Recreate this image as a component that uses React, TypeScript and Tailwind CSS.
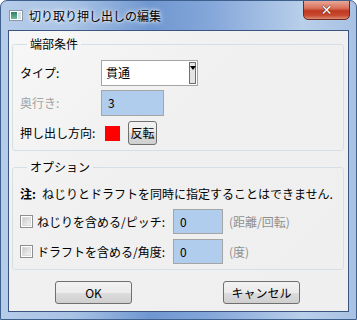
import React from 'react';

const font = "font-['Noto_Sans_CJK_JP','Noto_Sans_CJK_SC',sans-serif]";

function Checkbox() {
  return (
    <div className="w-[13px] h-[13px] border border-[#8e8f8f] bg-white flex items-center justify-center shrink-0">
      <div className="w-[9px] h-[9px] bg-[linear-gradient(135deg,#cbcbcb,#f4f4f4)] border border-[#dcdcdc]" />
    </div>
  );
}

function Button({ label, className = '' }: { label: string; className?: string }) {
  return (
    <div
      className={`flex items-center justify-center border border-[#707070] rounded-[3px] bg-[linear-gradient(#f2f2f2_0%,#ebebeb_50%,#dddddd_51%,#cfcfcf_100%)] text-[12px] text-black ${className}`}
    >
      {label}
    </div>
  );
}

function BlueInput({ value, className = '' }: { value: string; className?: string }) {
  return (
    <div className={`border border-[#a5a5a5] bg-[#b1cdee] flex items-center pl-[6px] text-[12px] text-black ${className}`}>
      {value}
    </div>
  );
}

export default function App() {
  return (
    <div
      className={`${font} relative w-[357px] h-[320px] rounded-t-[7px] border border-[#3f5f8c] bg-[linear-gradient(90deg,#b5cce9_0%,#a9c3e5_20%,#6f97d0_42%,#86a8da_60%,#b9cfea_85%,#a8c2e4_100%)] flex flex-col px-[7px] pb-[7px] overflow-hidden`}
    >
      {/* title bar */}
      <div className="h-[29px] flex items-center shrink-0">
        <div className="ml-[1px] w-[14px] h-[11px] border border-[#8a9aa8] bg-white flex p-[1px] gap-[1px]">
          <div className="w-[6px] h-full bg-[linear-gradient(#2f7f6a,#6fb89a)]" />
          <div className="flex-1 h-full bg-[#d8dde2]" />
        </div>
        <span className="ml-[6px] text-[12px] text-black [text-shadow:0_0_6px_#ffffff,0_0_3px_#ffffff]">
          切り取り押し出しの編集
        </span>
      </div>
      <div className="absolute right-[6px] top-[-1px] w-[47px] h-[20px] rounded-b-[5px] border border-[#6e2a21] bg-[linear-gradient(#e8a797_0%,#d9705c_40%,#c0391f_55%,#c84a31_80%,#dd8a72_100%)] flex items-center justify-center">
        <span className="text-white font-bold text-[14px] leading-none font-['DejaVu_Sans',sans-serif] [text-shadow:0_0_1px_#3a1a14,0_0_1px_#3a1a14]">
          ✕
        </span>
      </div>

      {/* client area */}
      <div className="flex-1 border border-[#3a5680] bg-[linear-gradient(135deg,#f7f7f7_0%,#f0f0f0_40%,#efefef_100%)] flex flex-col pl-[3px] pr-[4px]">
        <fieldset className="mt-[5px] border border-[#d5dfe5] rounded-[3px] pl-[7px] pr-[7px] pt-[8px] pb-[5px]">
          <legend className="ml-[7px] px-[3px] text-[12px] leading-[16px] text-black">端部条件</legend>
          <div className="flex items-center h-[26px]">
            <span className="w-[81px] text-[12px] text-black">タイプ:</span>
            <div className="w-[97px] h-[26px] border border-[#a5a5a5] bg-white flex items-center pl-[4px] pr-[1px]">
              <span className="flex-1 text-[12px] text-black">貫通</span>
              <div className="w-[7px] h-[22px] border border-[#6f6f6f] bg-[#e4e4e4] flex justify-center pt-[3px]">
                <div className="w-0 h-0 border-l-[3px] border-r-[3px] border-t-[4px] border-l-transparent border-r-transparent border-t-black" />
              </div>
            </div>
          </div>
          <div className="flex items-center h-[26px] mt-[4px]">
            <span className="w-[81px] text-[12px] text-[#a3a3a3]">奥行き:</span>
            <BlueInput value="3" className="w-[63px] h-[26px]" />
          </div>
          <div className="flex items-center h-[24px] mt-[5px]">
            <span className="w-[85px] text-[12px] text-black">押し出し方向:</span>
            <div className="w-[15px] h-[15px] bg-[#ff0000]" />
            <Button label="反転" className="ml-[8px] w-[29px] h-[24px]" />
          </div>
        </fieldset>

        <fieldset className="mt-[8px] border border-[#d5dfe5] rounded-[3px] pl-[7px] pr-[7px] pt-[11px] pb-[5px]">
          <legend className="ml-[7px] px-[3px] text-[12px] leading-[16px] text-black">オプション</legend>
          <div className="h-[16px] flex items-center text-[12px] text-black whitespace-nowrap">
            <span className="font-bold">注:</span>
            <span className="ml-[6px]">ねじりとドラフトを同時に指定することはできません.</span>
          </div>
          <div className="flex items-center h-[25px] mt-[7px]">
            <Checkbox />
            <span className="ml-[4px] w-[136px] text-[12px] text-black">ねじりを含める/ピッチ:</span>
            <BlueInput value="0" className="w-[50px] h-[25px]" />
            <span className="ml-[6px] text-[12px] text-[#8f8f8f]">(距離/回転)</span>
          </div>
          <div className="flex items-center h-[25px] mt-[5px]">
            <Checkbox />
            <span className="ml-[4px] w-[136px] text-[12px] text-black">ドラフトを含める/角度:</span>
            <BlueInput value="0" className="w-[50px] h-[25px]" />
            <span className="ml-[6px] text-[12px] text-[#8f8f8f]">(度)</span>
          </div>
        </fieldset>

        <div className="flex mt-[11px]">
          <Button label="OK" className="ml-[43px] w-[77px] h-[23px]" />
          <Button label="キャンセル" className="ml-[91px] w-[77px] h-[23px]" />
        </div>
      </div>
    </div>
  );
}
